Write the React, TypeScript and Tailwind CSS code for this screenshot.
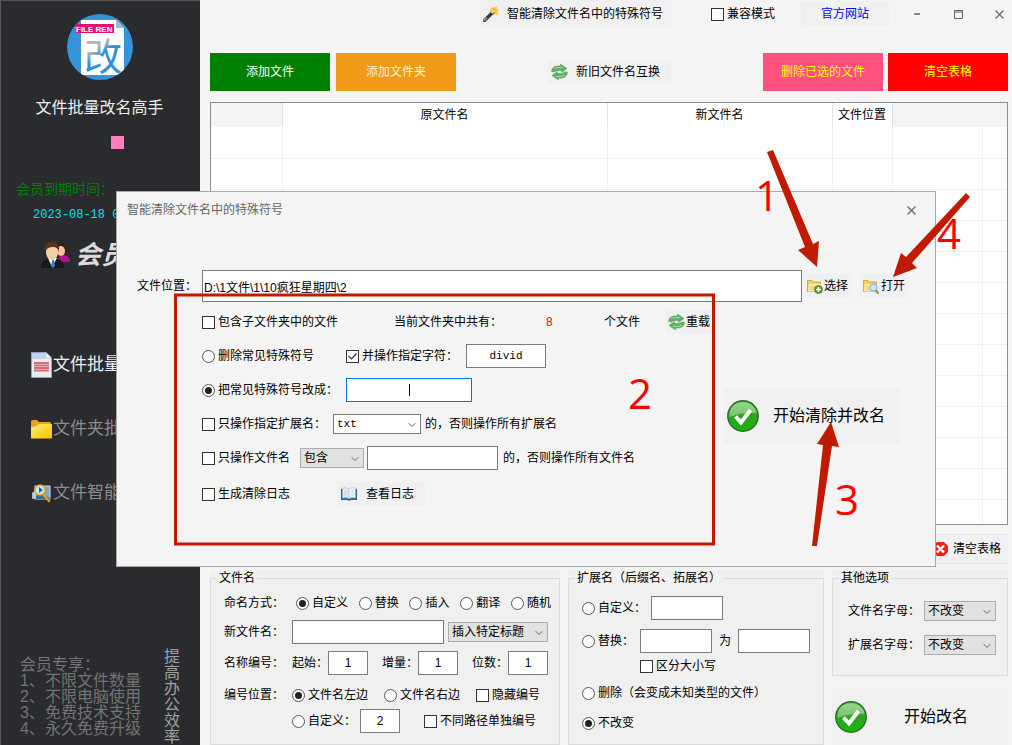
import React from "react";
import { ChevronDown } from "lucide-react";

const FONT = "font-['Liberation_Sans','Noto_Sans_CJK_SC',sans-serif]";

/* ---------- icons ---------- */

function LogoIcon() {
  return (
    <svg width="66" height="66" viewBox="0 0 66 66" aria-hidden="true">
      <defs>
        <clipPath id="logo-clip"><circle cx="33" cy="33" r="33" /></clipPath>
        <linearGradient id="logo-ink" x1="0" y1="0" x2="0.5" y2="1">
          <stop offset="0.45" stopColor="#b4b4b4" />
          <stop offset="0.6" stopColor="#2f8fd8" />
        </linearGradient>
      </defs>
      <g clipPath="url(#logo-clip)">
        <rect width="66" height="66" fill="#3593d8" />
        <path d="M14 6H49L57 14V61H14Z" fill="#fff" />
        <path d="M49 6V14H57Z" fill="#aeb4ba" />
        <text x="17" y="56" fontSize="38" fill="url(#logo-ink)" fontFamily="Noto Sans CJK SC, sans-serif">改</text>
      </g>
      <rect x="9" y="10" width="38" height="9" fill="#e0116f" />
      <text x="9" y="18" fontSize="8" fontWeight="bold" fill="#fff" fontFamily="Liberation Sans, sans-serif">FILE REN</text>
    </svg>
  );
}

function PeopleIcon() {
  return (
    <svg width="30" height="28" viewBox="0 0 30 28" aria-hidden="true">
      <path d="M16 21Q17 14 23 14Q29 15 29 21Z" fill="#b3128c" />
      <circle cx="21" cy="8" r="6" fill="#3a2018" />
      <ellipse cx="20" cy="10" rx="4" ry="5" fill="#f3c59a" />
      <path d="M0 27Q0 19 7 18L17 18Q23 20 23 27Z" fill="#17191d" />
      <path d="M7 17L11 26L16 17Z" fill="#fff" />
      <path d="M11 19H13L14 25L12 27L10 25Z" fill="#2c87d6" />
      <ellipse cx="11" cy="11" rx="6" ry="8" fill="#f7cfa4" />
      <path d="M4 11Q2 1 11 1Q19 1 18 11Q17 6 12 6Q6 6 4 11Z" fill="#5a3220" />
    </svg>
  );
}

function DocIcon() {
  return (
    <svg width="21" height="26" viewBox="0 0 21 26" aria-hidden="true">
      <path d="M.5 .5H15L20.5 6V25.5H.5Z" fill="#e6edf7" stroke="#8ea5c4" />
      <path d="M1 1H14V7H1Z" fill="#c3d2e8" />
      <path d="M15 .5V6H20.5Z" fill="#fff" stroke="#8ea5c4" strokeWidth=".6" />
      <path d="M3 11H18M3 13.5H18M3 16H18M3 18.5H18" stroke="#d96a70" strokeWidth="2" />
    </svg>
  );
}

function FolderIcon() {
  return (
    <svg width="21" height="20" viewBox="0 0 21 20" aria-hidden="true">
      <defs>
        <linearGradient id="folder-fill" x1="0" y1="0" x2="1" y2="1">
          <stop offset="0" stopColor="#fff0a0" />
          <stop offset="0.5" stopColor="#ffd92e" />
          <stop offset="1" stopColor="#f8bd10" />
        </linearGradient>
      </defs>
      <path d="M0 3Q0 1 2 1H6L8 3H19Q20 3 20 5V8H0Z" fill="#e3a81a" />
      <path d="M0 8Q5 8 8 5H21V19.5H0Z" fill="url(#folder-fill)" />
    </svg>
  );
}

function PreviewIcon() {
  return (
    <svg width="21" height="19" viewBox="0 0 21 19" aria-hidden="true">
      <path d="M1 9L5 6V14L1 15Z" fill="#b9c4cc" />
      <rect x="4" y="2" width="15" height="13" fill="#78a9c4" stroke="#d3e2ea" />
      <path d="M5 12L10 9L19 14V15H5Z" fill="#3d6f8e" />
      <path d="M12 10L18 17" stroke="#e8952a" strokeWidth="2.6" strokeLinecap="round" />
      <circle cx="9" cy="6" r="5" fill="#c8ecfa" stroke="#e7a33c" strokeWidth="1.5" />
      <path d="M8 3L12 6L8 9Z" fill="#2a5d9a" />
    </svg>
  );
}

function WandIcon() {
  return (
    <svg width="16" height="16" viewBox="0 0 16 16" aria-hidden="true">
      <path d="M10 0L11.5 1.5L14 .5L13.5 3L16 4L14 6L15.5 9L12 8L10 10L9 7L6 6L8 4L7 1.5L10 2Z" fill="#fbc62c" />
      <path d="M1.5 14.5L9.5 6.5" stroke="#3b3b3b" strokeWidth="3.2" strokeLinecap="round" />
      <path d="M1.5 14L3 12.5" stroke="#8b8b8b" strokeWidth="2.4" strokeLinecap="round" />
      <path d="M8.5 7L10.5 5" stroke="#e6e6e6" strokeWidth="2.4" />
    </svg>
  );
}

function SwapIcon() {
  return (
    <svg width="17" height="16" viewBox="0 0 17 16" aria-hidden="true">
      <path d="M.5 7.5Q1 2 7 2H9.5V0L16 4.5L10.5 8.5V6.5H7Q4.5 6.5 3.5 8Z" fill="#62b068" stroke="#4b9a54" strokeWidth=".5" />
      <path d="M16.5 8Q16 14 10 14H7.5V16L1 11.500L6.500 7.500V9.500H10Q12.500 9.500 13.500 8Z" fill="#62b068" stroke="#4b9a54" strokeWidth=".5" />
      <path d="M3 5Q4 3.5 8 3.5H12M14 11Q13 12.5 9 12.5H5" stroke="#a5d6a6" fill="none" />
    </svg>
  );
}

function FolderActionIcon({ search = false }: { search?: boolean }) {
  return (
    <svg width="16" height="15" viewBox="0 0 16 15" aria-hidden="true">
      <path d="M.5 1.5H5L6.5 3H13.5V12.5H.5Z" fill="#f6cf62" stroke="#d9a441" />
      <path d="M2 5H14L13 12.5H1Z" fill="#fdeaa6" />
      <path d="M3 8H9M3 10H7" stroke="#e9bd55" />
      {search ? (
        <>
          <path d="M12.5 11L15 14" stroke="#c07c4c" strokeWidth="2" strokeLinecap="round" />
          <circle cx="10.5" cy="8.5" r="3.5" fill="#cfe5fb" stroke="#7eaee0" />
        </>
      ) : (
        <>
          <circle cx="11.5" cy="10.5" r="4" fill="#5c9a3c" stroke="#3d7427" strokeWidth=".6" />
          <path d="M9 10.5H14M11.5 8V13" stroke="#fff" strokeWidth="1.6" />
        </>
      )}
    </svg>
  );
}

function BookIcon() {
  return (
    <svg width="16" height="14" viewBox="0 0 16 14" aria-hidden="true">
      <path d="M0 2H16V13H10L8 14L6 13H0Z" fill="#2566a0" />
      <path d="M1.5 1Q6 0 8 2V11.5Q5 10 1.5 11Z" fill="#e6ebf0" stroke="#9fb9d2" strokeWidth=".6" />
      <path d="M14.5 1Q10 0 8 2V11.5Q11 10 14.5 11Z" fill="#f5f6f8" stroke="#9fb9d2" strokeWidth=".6" />
      <path d="M3 4H6M3 6H6M3 8H6M10 4H13M10 6H13M10 8H13" stroke="#c3cad2" strokeWidth=".8" />
    </svg>
  );
}

function OkIcon({ id }: { id: string }) {
  return (
    <svg width="32" height="32" viewBox="0 0 32 32" aria-hidden="true">
      <defs>
        <linearGradient id={id} x1="0" y1="0" x2="0" y2="1">
          <stop offset="0" stopColor="#6cc25a" />
          <stop offset="0.5" stopColor="#2fa31f" />
          <stop offset="1" stopColor="#18b80a" />
        </linearGradient>
      </defs>
      <circle cx="16" cy="16" r="15.2" fill={`url(#${id})`} stroke="#2b6b2b" strokeWidth="1.4" />
      <path d="M2.5 17Q2 2.5 16 2.5Q28 3 29.5 13Q17 12 2.5 17Z" fill="#fff" opacity=".35" />
      <path d="M8.5 16.5L14 22.5L23.500 10" fill="none" stroke="#fff" strokeWidth="4" />
    </svg>
  );
}

function RemoveIcon() {
  return (
    <svg width="15" height="14" viewBox="0 0 15 14" aria-hidden="true">
      <path d="M4 0H11L15 4V10L11 14H4L0 10V4Z" fill="#f0201c" />
      <path d="M4 3.5L11 10.5M11 3.5L4 10.5" stroke="#fff" strokeWidth="2.4" />
    </svg>
  );
}

function CloseIcon() {
  return (
    <svg width="9" height="9" viewBox="0 0 9 9" aria-hidden="true">
      <path d="M.5 .5L8.5 8.5M8.5 .5L.5 8.5" stroke="currentColor" strokeWidth="1.2" />
    </svg>
  );
}

/* ---------- form controls ---------- */

type ChoiceProps = {
  label: string;
  name?: string;
  type?: "checkbox" | "radio";
  checked?: boolean;
  className?: string;
};

function Choice({ label, name, type = "checkbox", checked, className = "" }: ChoiceProps) {
  return (
    <label className={`flex shrink-0 items-center gap-[3px] whitespace-nowrap ${className}`}>
      <span className="relative block size-[13px]">
        {type === "radio" ? (
          <>
            <input type="radio" name={name} defaultChecked={checked} className="peer block size-[13px] appearance-none rounded-full border border-[#555] bg-white" />
            <span className="absolute inset-[3px] hidden rounded-full bg-[#222] peer-checked:block" />
          </>
        ) : (
          <>
            <input type="checkbox" defaultChecked={checked} className="peer block size-[13px] appearance-none border border-[#333] bg-white" />
            <svg viewBox="0 0 13 13" className="absolute inset-0 hidden peer-checked:block" aria-hidden="true">
              <path d="M2.5 6L5.5 9L10.5 3.5" fill="none" stroke="#333" strokeWidth="1.2" />
            </svg>
          </>
        )}
      </span>
      {label}
    </label>
  );
}

function TextBox({ label, value, className = "" }: { label: string; value?: string; className?: string }) {
  return (
    <input
      type="text"
      aria-label={label}
      defaultValue={value}
      className={`h-6 min-w-0 border border-[#7a7a7a] bg-white text-center outline-none ${className}`}
    />
  );
}

function Select({ label, value, className = "" }: { label: string; value: string; className?: string }) {
  return (
    <span className={`relative block h-5 shrink-0 border ${className}`}>
      <select aria-label={label} className="block h-full w-full appearance-none pl-[3px] outline-none">
        <option>{value}</option>
      </select>
      <ChevronDown size={12} strokeWidth={2} className="pointer-events-none absolute top-[4px] right-[2px] text-[#666]" />
    </span>
  );
}

function Group({ title, children, className = "" }: { title: string; children: React.ReactNode; className?: string }) {
  return (
    <div className={`flex min-w-0 bg-[#f0f0f0] ${className}`}>
      <fieldset className="min-w-0 flex-1 border border-[#dcdcdc]">
        <legend className="ml-[6px] h-4 px-[2px] leading-4">{title}</legend>
        {children}
      </fieldset>
    </div>
  );
}

/* ---------- sections ---------- */

function Sidebar() {
  const menu = [
    { icon: <DocIcon />, text: "文件批量", tone: "text-[#f0f0f0]" },
    { icon: <FolderIcon />, text: "文件夹批", tone: "text-[#8c8c8c]" },
    { icon: <PreviewIcon />, text: "文件智能", tone: "text-[#8c8c8c]" },
  ];
  return (
    <aside className="flex w-[200px] shrink-0 flex-col overflow-hidden border-t border-l border-[#55565a] bg-[#2a2b2f] pt-[13px]">
      <div className="flex justify-center pr-[2px]"><LogoIcon /></div>
      <h1 className="mt-4 h-6 pr-[2px] text-center text-base leading-6 text-[#ededed]">文件批量改名高手</h1>
      <div className="mt-4 ml-[110px] size-[13px] bg-[#ff80c0]" />
      <p className="mt-[30px] ml-[15px] h-5 text-sm leading-5 text-[#008000]">会员到期时间：</p>
      <p className="mt-[6px] ml-8 h-5 font-['Liberation_Mono',monospace] leading-5 whitespace-pre text-[#00e5ee]">2023-08-18 0</p>
      <div className="mt-[15px] ml-10 flex h-[30px] items-center gap-1">
        <PeopleIcon />
        <span className="text-[26px] leading-[30px] font-bold text-[#dcdcdc] italic">会员</span>
      </div>
      <nav className="mt-[79px] ml-[30px] flex flex-col gap-8">
        {menu.map((m) => (
          <a key={m.text} href="#" className={`flex h-8 items-center gap-px text-[17px] whitespace-nowrap ${m.tone}`}>
            {m.icon}
            {m.text}
          </a>
        ))}
      </nav>
      <div className="mt-auto flex justify-between pr-5 pl-[19px] text-base leading-4">
        <div className="mt-2 whitespace-nowrap text-[#747474]">
          <p>会员专享：</p>
          <ol>
            <li>1、不限文件数量</li>
            <li>2、不限电脑使用</li>
            <li>3、免费技术支持</li>
            <li>4、永久免费升级</li>
          </ol>
        </div>
        <p className="w-4 break-all text-[#a0a0a0]">提高办公效率</p>
      </div>
    </aside>
  );
}

function TopBar() {
  return (
    <div className="flex h-7 items-center justify-end pr-px">
      <button className="flex h-7 w-48 items-center gap-2 bg-[#f0f0f0] pl-[3px]">
        <WandIcon />
        智能清除文件名中的特殊符号
      </button>
      <Choice label="兼容模式" className="mr-[26px] ml-[39px]" />
      <button className="h-6 w-[88px] bg-[#f0f0f0] text-[#0000ff]">官方网站</button>
      <div className="ml-5 flex gap-[25px] text-[#666]">
        <button aria-label="最小化" className="flex size-4 items-center justify-center">
          <svg width="6" height="2"><path d="M0 1H6" stroke="currentColor" strokeWidth="1.5" /></svg>
        </button>
        <button aria-label="最大化" className="flex size-4 items-center justify-center">
          <svg width="9" height="9"><path d="M.5 .5H8.5V8.5H.5ZM0 2H9" fill="none" stroke="currentColor" /></svg>
        </button>
        <button aria-label="关闭" className="flex size-4 items-center justify-center">
          <CloseIcon />
        </button>
      </div>
    </div>
  );
}

function Toolbar() {
  return (
    <div className="mt-[25px] flex h-[38px] items-center">
      <button className="h-full w-[120px] bg-[#008000] text-white">添加文件</button>
      <button className="ml-[6px] h-full w-[120px] bg-[#f09a18] text-[#fff3d6]">添加文件夹</button>
      <button className="ml-[92px] flex h-6 w-[123px] items-center gap-2 bg-[#f0f0f0] pl-[3px]">
        <SwapIcon />
        新旧文件名互换
      </button>
      <button className="ml-auto h-full w-[120px] bg-[#ff5080] text-[#ffff00]">删除已选的文件</button>
      <button className="ml-[5px] h-full w-[120px] bg-[#ff0000] text-[#ffff00]">清空表格</button>
    </div>
  );
}

function FileTable() {
  const rows = Array.from({ length: 13 });
  return (
    <div className="mt-[11px] min-h-0 flex-1 overflow-hidden border border-[#8a8d96] bg-white">
      <table className="w-full table-fixed border-collapse">
        <colgroup>
          <col className="w-[71px]" />
          <col className="w-[325px]" />
          <col className="w-[225px]" />
          <col className="w-[60px]" />
          <col className="w-[90px]" />
          <col />
        </colgroup>
        <thead>
          <tr className="h-6">
            <th className="border-r border-[#e2e2e2] bg-[#f4f4f4]" />
            <th className="border-r border-[#e2e2e2] font-normal">原文件名</th>
            <th className="border-r border-[#e2e2e2] font-normal">新文件名</th>
            <th className="border-r border-[#e2e2e2] font-normal whitespace-nowrap">文件位置</th>
            <th colSpan={2} className="bg-[#f4f4f4]" />
          </tr>
        </thead>
        <tbody>
          {rows.map((_, i) => (
            <tr key={i} className="h-[31px] border-b border-[#f0f0f0]">
              {[0, 1, 2, 3, 4].map((c) => (
                <td key={c} className="border-r border-[#f0f0f0]" />
              ))}
              <td />
            </tr>
          ))}
        </tbody>
      </table>
    </div>
  );
}

function NameGroup() {
  return (
    <Group title="文件名">
      <div className="flex h-[34px] items-center pr-2 pl-[13px]">
        <span className="w-[72px] shrink-0">命名方式：</span>
        <div className="flex flex-1 justify-between">
          <Choice type="radio" name="mode" label="自定义" checked />
          <Choice type="radio" name="mode" label="替换" />
          <Choice type="radio" name="mode" label="插入" />
          <Choice type="radio" name="mode" label="翻译" />
          <Choice type="radio" name="mode" label="随机" />
        </div>
      </div>
      <div className="flex h-6 items-center pr-[11px] pl-[13px]">
        <span className="w-[68px] shrink-0">新文件名：</span>
        <TextBox label="新文件名" className="flex-1" />
        <Select label="插入" value="插入特定标题" className="ml-1 w-[100px] border-[#adadad] bg-[#e1e1e1]" />
      </div>
      <div className="flex h-[38px] items-center pr-[11px] pl-[13px]">
        <span className="w-[68px] shrink-0">名称编号：</span>
        <div className="flex flex-1 items-center justify-between">
          {["起始", "增量", "位数"].map((t) => (
            <label key={t} className="flex items-center whitespace-nowrap">
              {t}：
              <TextBox label={t} value="1" className="w-10" />
            </label>
          ))}
        </div>
      </div>
      <div className="flex h-[26px] items-center gap-4 pl-[13px]">
        <span className="w-[52px] shrink-0 whitespace-nowrap">编号位置：</span>
        <Choice type="radio" name="pos" label="文件名左边" checked />
        <Choice type="radio" name="pos" label="文件名右边" />
        <Choice label="隐藏编号" />
      </div>
      <div className="flex h-[26px] items-center pl-[81px]">
        <Choice type="radio" name="pos" label="自定义：" />
        <TextBox label="自定义位置" value="2" className="ml-1 w-10" />
        <Choice label="不同路径单独编号" className="ml-6" />
      </div>
    </Group>
  );
}

function ExtGroup() {
  return (
    <Group title="扩展名（后缀名、拓展名）">
      <div className="pt-[5px] pl-[13px]">
        <div className="flex h-[34px] items-center">
          <Choice type="radio" name="ext" label="自定义：" />
          <TextBox label="自定义扩展名" className="ml-[5px] w-[72px]" />
        </div>
        <div className="flex h-8 items-center">
          <Choice type="radio" name="ext" label="替换：" />
          <TextBox label="原扩展名" className="ml-[6px] w-[72px]" />
          <span className="mx-[7px]">为</span>
          <TextBox label="新扩展名" className="w-[72px]" />
        </div>
        <Choice label="区分大小写" className="ml-[58px] h-[18px]" />
        <Choice type="radio" name="ext" label="删除（会变成未知类型的文件）" className="h-9" />
        <Choice type="radio" name="ext" label="不改变" checked className="h-6" />
      </div>
    </Group>
  );
}

function OtherOptions() {
  return (
    <div className="flex min-w-0 flex-col gap-3">
      <Group title="其他选项" className="h-[106px]">
        <div className="pt-2 pr-[11px] pl-[15px]">
          {["文件名字母", "扩展名字母"].map((t) => (
            <div key={t} className="flex h-[34px] items-center justify-between">
              <span className="whitespace-nowrap">{t}：</span>
              <Select label={t} value="不改变" className="w-[72px] border-[#adadad] bg-[#e1e1e1]" />
            </div>
          ))}
        </div>
      </Group>
      <button className="flex flex-1 items-center bg-[#f0f0f0] pl-[3px] text-base">
        <OkIcon id="ok-main" />
        <span className="ml-[37px]">开始改名</span>
      </button>
    </div>
  );
}

function Dialog() {
  return (
    <section
      role="dialog"
      aria-label="智能清除文件名中的特殊符号"
      className="absolute top-[191px] right-[76px] left-[116px] h-[376px] border border-[#a8a8a8] bg-[#f4f4f4]"
    >
      <header className="flex h-9 items-center justify-between pr-[18px] pl-[10px] text-[#666]">
        <h2>智能清除文件名中的特殊符号</h2>
        <button aria-label="关闭" className="flex size-3 items-center justify-center">
          <CloseIcon />
        </button>
      </header>

      <div className="mt-[42px] flex h-8 items-center pr-[27px] pl-5">
        <label htmlFor="path" className="w-[65px] shrink-0 whitespace-nowrap">文件位置：</label>
        <input id="path" type="text" defaultValue="D:\1文件\1\10疯狂星期四\2" className="h-8 min-w-0 flex-1 border border-[#7a7a7a] bg-white px-px outline-none" />
        <button className="ml-[2px] flex h-6 w-12 items-center gap-px bg-[#f0f0f0] pl-[3px]">
          <FolderActionIcon />
          选择
        </button>
        <button className="ml-2 flex h-6 w-12 items-center gap-[2px] bg-[#f0f0f0] pl-[3px]">
          <FolderActionIcon search />
          打开
        </button>
      </div>

      <div className="mt-[3px] flex items-start pl-[85px]">
        <div className="w-[522px] shrink-0 whitespace-nowrap">
          <div className="flex h-[34px] items-center">
            <Choice label="包含子文件夹中的文件" className="w-48" />
            <span className="w-[152px]">当前文件夹中共有：</span>
            <span className="w-[58px] text-[#ff0000]">8</span>
            <span className="w-[62px]">个文件</span>
            <button className="flex h-6 w-12 items-center gap-px bg-[#f0f0f0] pl-[2px]">
              <SwapIcon />
              重载
            </button>
          </div>
          <div className="flex h-[34px] items-center">
            <Choice type="radio" name="clean" label="删除常见特殊符号" className="w-36" />
            <Choice label="并操作指定字符：" checked className="w-[120px]" />
            <TextBox label="指定字符" value="divid" className="w-20 font-['Liberation_Mono',monospace] text-[11px]" />
          </div>
          <div className="flex h-[34px] items-center">
            <Choice type="radio" name="clean" label="把常见特殊符号改成：" checked className="w-36" />
            <span className="relative flex">
              <input type="text" aria-label="替换字符" className="h-6 w-[126px] border border-[#0078d7] bg-white text-center outline-none" />
              <span className="absolute top-[6px] left-1/2 h-3 w-px bg-black" />
            </span>
          </div>
          <div className="flex h-[34px] items-center">
            <Choice label="只操作指定扩展名：" className="w-[131px]" />
            <Select label="扩展名" value="txt" className="w-[88px] border-[#7a7a7a] bg-white font-['Liberation_Mono',monospace] text-[11px]" />
            <span className="ml-1">的，否则操作所有扩展名</span>
          </div>
          <div className="flex h-[34px] items-center">
            <Choice label="只操作文件名" className="w-[98px]" />
            <Select label="匹配方式" value="包含" className="w-16 border-[#adadad] bg-[#e1e1e1]" />
            <TextBox label="文件名关键字" className="ml-[3px] w-[131px]" />
            <span className="ml-[5px]">的，否则操作所有文件名</span>
          </div>
          <div className="flex h-[38px] items-center">
            <Choice label="生成清除日志" className="w-[136px]" />
            <button className="flex h-6 w-[87px] items-center gap-[9px] bg-[#f0f0f0] pl-[3px]">
              <BookIcon />
              查看日志
            </button>
          </div>
        </div>
        <button className="mt-[82px] flex h-[57px] w-44 items-center bg-[#f0f0f0] pl-[3px] text-base whitespace-nowrap">
          <OkIcon id="ok-dialog" />
          <span className="ml-[14px]">开始清除并改名</span>
        </button>
      </div>
    </section>
  );
}

// Red step markers drawn over the window
function StepMarks() {
  return (
    <svg className="pointer-events-none absolute top-0 left-0 h-full w-full" aria-hidden="true">
      <rect x="175.5" y="295" width="538" height="249" fill="none" stroke="#c01a00" strokeWidth="3" />
      <g fill="#c01a00">
        <path d="M767 152L773 150L813 244L819 241L817 267L798 250L805 247Z" />
        <path d="M966 193L970 197L912 263L917 268L893 277L901 253L906 257Z" />
        <path d="M812 546H817L832 446L839 447L831 422L817 444L823 445Z" />
      </g>
      <g fill="#ff0000" fontSize="42" fontFamily="Open Sans, sans-serif">
        <text x="755" y="211">1</text>
        <text x="628" y="409">2</text>
        <text x="835" y="515">3</text>
        <text x="937" y="249">4</text>
      </g>
    </svg>
  );
}

export default function App() {
  return (
    <div className={`relative flex h-screen overflow-hidden bg-[#f4f4f4] text-xs text-black ${FONT}`}>
      <Sidebar />
      <main className="flex min-w-0 flex-1 flex-col pr-1 pl-[10px]">
        <TopBar />
        <Toolbar />
        <FileTable />
        <div className="mt-[9px] flex h-[30px] justify-end">
          <button className="flex items-center gap-[5px] border-y border-[#e4e4e4] bg-[#f0f0f0] pr-[7px] pl-1">
            <RemoveIcon />
            清空表格
          </button>
        </div>
        <div className="mt-[6px] grid h-[175px] grid-cols-[350fr_256fr_176fr] gap-2">
          <NameGroup />
          <ExtGroup />
          <OtherOptions />
        </div>
      </main>
      <Dialog />
      <StepMarks />
    </div>
  );
}
